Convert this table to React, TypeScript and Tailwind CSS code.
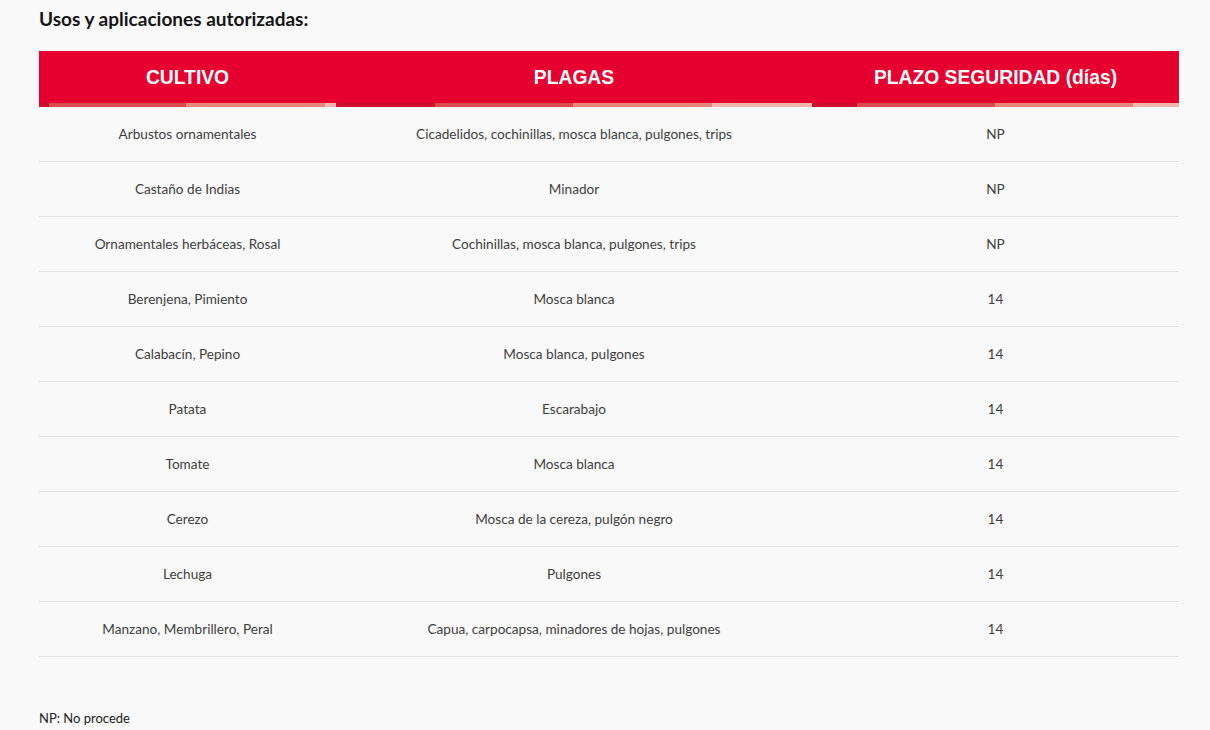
import React from "react";

const rows: [string, string, string][] = [
  ["Arbustos ornamentales", "Cicadelidos, cochinillas, mosca blanca, pulgones, trips", "NP"],
  ["Castaño de Indias", "Minador", "NP"],
  ["Ornamentales herbáceas, Rosal", "Cochinillas, mosca blanca, pulgones, trips", "NP"],
  ["Berenjena, Pimiento", "Mosca blanca", "14"],
  ["Calabacín, Pepino", "Mosca blanca, pulgones", "14"],
  ["Patata", "Escarabajo", "14"],
  ["Tomate", "Mosca blanca", "14"],
  ["Cerezo", "Mosca de la cereza, pulgón negro", "14"],
  ["Lechuga", "Pulgones", "14"],
  ["Manzano, Membrillero, Peral", "Capua, carpocapsa, minadores de hojas, pulgones", "14"],
];

const D = "bg-[#cf1030]";
const M = "bg-[#dc4b4b]";
const S = "bg-[#e8867c]";
const P = "bg-[#f3b6ae]";

function Strip({ segs }: { segs: [string, number][] }) {
  return (
    <div className="flex h-[4px]">
      {segs.map(([c, w], i) => (
        <div key={i} className={c} style={{ width: w }} />
      ))}
    </div>
  );
}

export default function App() {
  const body = "font-['Lato','Open_Sans',sans-serif]";
  return (
    <div className={`min-h-[730px] w-[1210px] bg-[#f9f9f9] pl-[39px] pr-[31px] ${body}`}>
      <div className="pt-[8px] h-[51px]">
        <h2 className="text-[19px] font-bold text-[#151515] leading-[22px]">Usos y aplicaciones autorizadas:</h2>
      </div>
      <div className="w-[1140px]">
        <div className="flex bg-[#e6002f] font-['Liberation_Sans',Arial,sans-serif] font-bold text-white text-[19.3px]">
          <div className="w-[297px]">
            <div className="h-[52px] flex items-center justify-center pt-[2px]">CULTIVO</div>
            <Strip segs={[[D, 10], [M, 137], [S, 139], [P, 11]]} />
          </div>
          <div className="w-[476px]">
            <div className="h-[52px] flex items-center justify-center pt-[2px]">PLAGAS</div>
            <Strip segs={[[D, 99], [M, 138], [S, 139], [P, 100]]} />
          </div>
          <div className="w-[367px]">
            <div className="h-[52px] flex items-center justify-center pt-[2px]">PLAZO SEGURIDAD (días)</div>
            <Strip segs={[[D, 45], [M, 138], [S, 138], [P, 46]]} />
          </div>
        </div>
        {rows.map(([a, b, c], i) => (
          <div key={i} className="flex h-[55px] border-b border-[#e3e3e3] text-[13.6px] text-[#404040]">
            <div className="w-[297px] flex items-center justify-center">{a}</div>
            <div className="w-[476px] flex items-center justify-center">{b}</div>
            <div className="w-[367px] flex items-center justify-center">{c}</div>
          </div>
        ))}
      </div>
      <div className="pt-[52px] text-[13px] text-[#222]">NP: No procede</div>
    </div>
  );
}
